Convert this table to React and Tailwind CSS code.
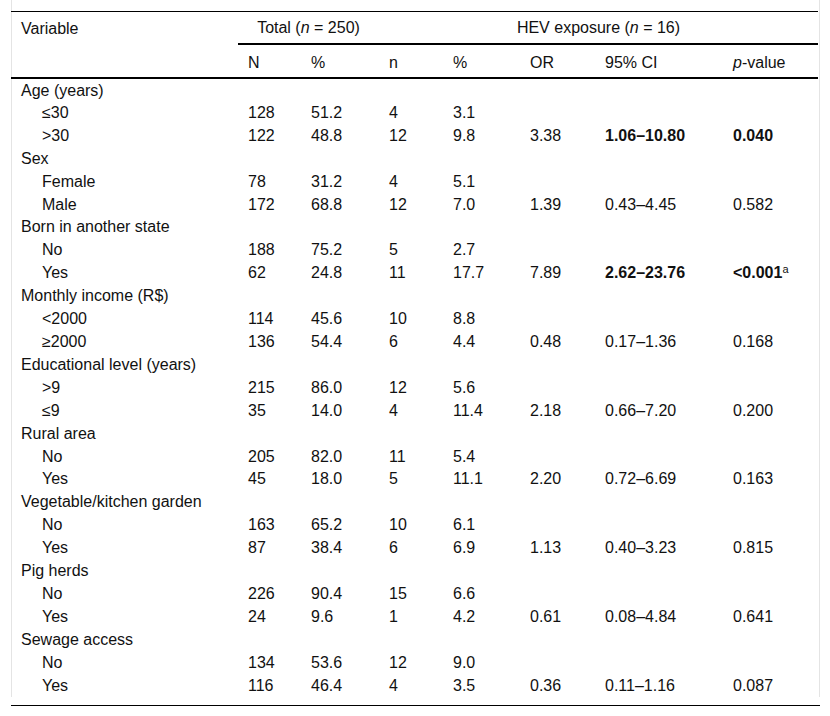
import React from 'react';

const rows = [
  { label: 'Age (years)', group: true },
  { label: '≤30', N: '128', pct: '51.2', n: '4', p2: '3.1' },
  { label: '>30', N: '122', pct: '48.8', n: '12', p2: '9.8', or: '3.38', ci: '1.06–10.80', p: '0.040', bold: true },
  { label: 'Sex', group: true },
  { label: 'Female', N: '78', pct: '31.2', n: '4', p2: '5.1' },
  { label: 'Male', N: '172', pct: '68.8', n: '12', p2: '7.0', or: '1.39', ci: '0.43–4.45', p: '0.582' },
  { label: 'Born in another state', group: true },
  { label: 'No', N: '188', pct: '75.2', n: '5', p2: '2.7' },
  { label: 'Yes', N: '62', pct: '24.8', n: '11', p2: '17.7', or: '7.89', ci: '2.62–23.76', p: '<0.001', bold: true, sup: 'a' },
  { label: 'Monthly income (R$)', group: true },
  { label: '<2000', N: '114', pct: '45.6', n: '10', p2: '8.8' },
  { label: '≥2000', N: '136', pct: '54.4', n: '6', p2: '4.4', or: '0.48', ci: '0.17–1.36', p: '0.168' },
  { label: 'Educational level (years)', group: true },
  { label: '>9', N: '215', pct: '86.0', n: '12', p2: '5.6' },
  { label: '≤9', N: '35', pct: '14.0', n: '4', p2: '11.4', or: '2.18', ci: '0.66–7.20', p: '0.200' },
  { label: 'Rural area', group: true },
  { label: 'No', N: '205', pct: '82.0', n: '11', p2: '5.4' },
  { label: 'Yes', N: '45', pct: '18.0', n: '5', p2: '11.1', or: '2.20', ci: '0.72–6.69', p: '0.163' },
  { label: 'Vegetable/kitchen garden', group: true },
  { label: 'No', N: '163', pct: '65.2', n: '10', p2: '6.1' },
  { label: 'Yes', N: '87', pct: '38.4', n: '6', p2: '6.9', or: '1.13', ci: '0.40–3.23', p: '0.815' },
  { label: 'Pig herds', group: true },
  { label: 'No', N: '226', pct: '90.4', n: '15', p2: '6.6' },
  { label: 'Yes', N: '24', pct: '9.6', n: '1', p2: '4.2', or: '0.61', ci: '0.08–4.84', p: '0.641' },
  { label: 'Sewage access', group: true },
  { label: 'No', N: '134', pct: '53.6', n: '12', p2: '9.0' },
  { label: 'Yes', N: '116', pct: '46.4', n: '4', p2: '3.5', or: '0.36', ci: '0.11–1.16', p: '0.087' },
];

const cell = 'pl-[10px] pt-[2px] pb-0 pr-0 h-[22.92px] align-middle text-left whitespace-nowrap';
const sub = 'pl-[10px] pt-[4px] text-left font-normal';

export default function App() {
  return (
    <div
      className="w-[830px] h-[716px] bg-white pl-[11px] pr-[10px] text-[16px] leading-[20px] text-[#111]"
      style={{ fontFamily: '"Liberation Sans", Arial, sans-serif' }}
    >
      <div className="h-[697px] border-x border-[#e4e4e4] pt-[11px]">
        <table className="w-[807px] -ml-px table-fixed border-collapse">
          <colgroup>
            <col className="w-[227px]" />
            <col className="w-[63px]" />
            <col className="w-[78px]" />
            <col className="w-[64px]" />
            <col className="w-[77px]" />
            <col className="w-[75px]" />
            <col className="w-[128px]" />
            <col className="w-[95px]" />
          </colgroup>
          <thead>
            <tr className="border-t border-black">
              <th rowSpan={2} className="pl-[10px] pt-[7px] align-top text-left font-normal">
                Variable
              </th>
              <th colSpan={2} className="h-[32px] pt-[1px] border-b-2 border-black text-center font-normal">
                Total (<i>n</i> = 250)
              </th>
              <th colSpan={5} className="h-[32px] pt-[1px] border-b-2 border-black text-center font-normal">
                HEV exposure (<i>n</i> = 16)
              </th>
            </tr>
            <tr className="border-b-2 border-black">
              <th className={sub + ' h-[34px]'}>N</th>
              <th className={sub}>%</th>
              <th className={sub}>n</th>
              <th className={sub}>%</th>
              <th className={sub}>OR</th>
              <th className={sub}>95% CI</th>
              <th className={sub}>
                <i>p</i>-value
              </th>
            </tr>
          </thead>
          <tbody>
            {rows.map((r, i) => (
              <tr key={i}>
                <td className={cell}>
                  <span className={r.group ? '' : 'pl-[21px]'}>{r.label}</span>
                </td>
                <td className={cell}>{r.N}</td>
                <td className={cell}>{r.pct}</td>
                <td className={cell}>{r.n}</td>
                <td className={cell}>{r.p2}</td>
                <td className={cell}>{r.or}</td>
                <td className={cell + (r.bold ? ' font-bold' : '')}>{r.ci}</td>
                <td className={cell}>
                  <span className={r.bold ? 'font-bold' : ''}>{r.p}</span>
                  {r.sup && <sup className="text-[11px]">{r.sup}</sup>}
                </td>
              </tr>
            ))}
          </tbody>
        </table>
      </div>
      <div className="mt-[8px] h-px bg-black" />
    </div>
  );
}
